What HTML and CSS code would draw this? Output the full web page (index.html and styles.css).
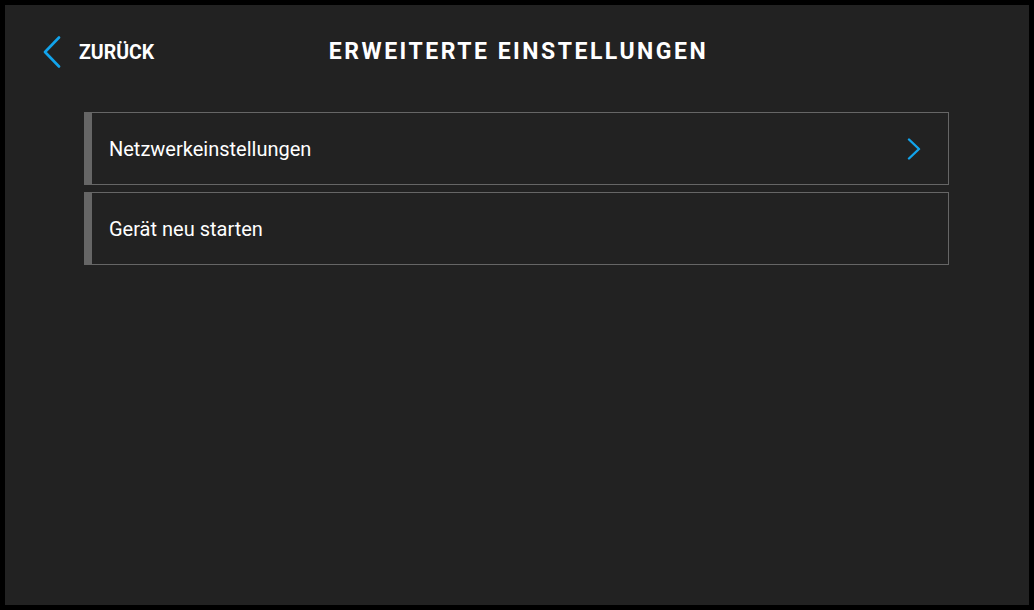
FILE: index.html
```html
<!DOCTYPE html>
<html lang="de">

<head>
    <meta charset="UTF-8">
    <meta name="viewport" content="width=device-width, initial-scale=1.0">
    <title>Erweiterte Einstellungen</title>
    <link rel="stylesheet" href="styles.css">
</head>

<body>
    <div class="screen">
        <!-- Kopfzeile -->
        <header class="top-bar">
            <button class="back-button">
                <svg class="back-icon" width="18" height="32" viewBox="0 0 18 32">
                    <path d="M16 1.5 L2 16 L16 30.5" fill="none" stroke="#12a4ec" stroke-width="2.6" stroke-linecap="round" stroke-linejoin="round"/>
                </svg>
                <span>ZURÜCK</span>
            </button>
            <h1>ERWEITERTE EINSTELLUNGEN</h1>
        </header>

        <!-- Menü -->
        <ul class="menu-list">
            <li class="menu-item">
                <span class="menu-label">Netzwerkeinstellungen</span>
                <svg class="menu-arrow" width="14" height="22" viewBox="0 0 14 22">
                    <path d="M2 1.5 L12 11 L2 20.5" fill="none" stroke="#12a4ec" stroke-width="2.4" stroke-linecap="round" stroke-linejoin="round"/>
                </svg>
            </li>
            <li class="menu-item">
                <span class="menu-label">Gerät neu starten</span>
            </li>
        </ul>
    </div>
</body>

</html>
```

FILE: styles.css
```css
html, body {
    margin: 0;
    padding: 0;
    background-color: #000;
}

body {
    font-family: Roboto, "Liberation Sans", Arial, sans-serif;
    color: #fff;
}

.screen {
    box-sizing: border-box;
    width: 1024px;
    height: 600px;
    margin: 5px;
    background-color: #222;
}

.top-bar {
    position: relative;
    height: 107px;
    display: flex;
    align-items: flex-start;
    justify-content: center;
}

.back-button {
    position: absolute;
    top: 31px;
    left: 38px;
    display: flex;
    align-items: center;
    gap: 18px;
    padding: 0;
    background: none;
    border: none;
    color: #fff;
    font-family: inherit;
    font-size: 19.5px;
    font-weight: bold;
    cursor: pointer;
}

.back-icon {
    display: block;
}

h1 {
    margin: 0 0 0 3px;
    padding-top: 33px;
    font-size: 23px;
    font-weight: bold;
    letter-spacing: 2.5px;
    line-height: 28px;
}

.menu-list {
    list-style: none;
    margin: 0 80px 0 79px;
    padding: 0;
    display: flex;
    flex-direction: column;
    gap: 7px;
}

.menu-item {
    display: flex;
    align-items: center;
    justify-content: space-between;
    height: 71px;
    padding: 0 27px 0 17px;
    border: 1px solid #666;
    border-left: 8px solid #666;
}

.menu-label {
    font-size: 20px;
}

.menu-arrow {
    display: block;
}
```
